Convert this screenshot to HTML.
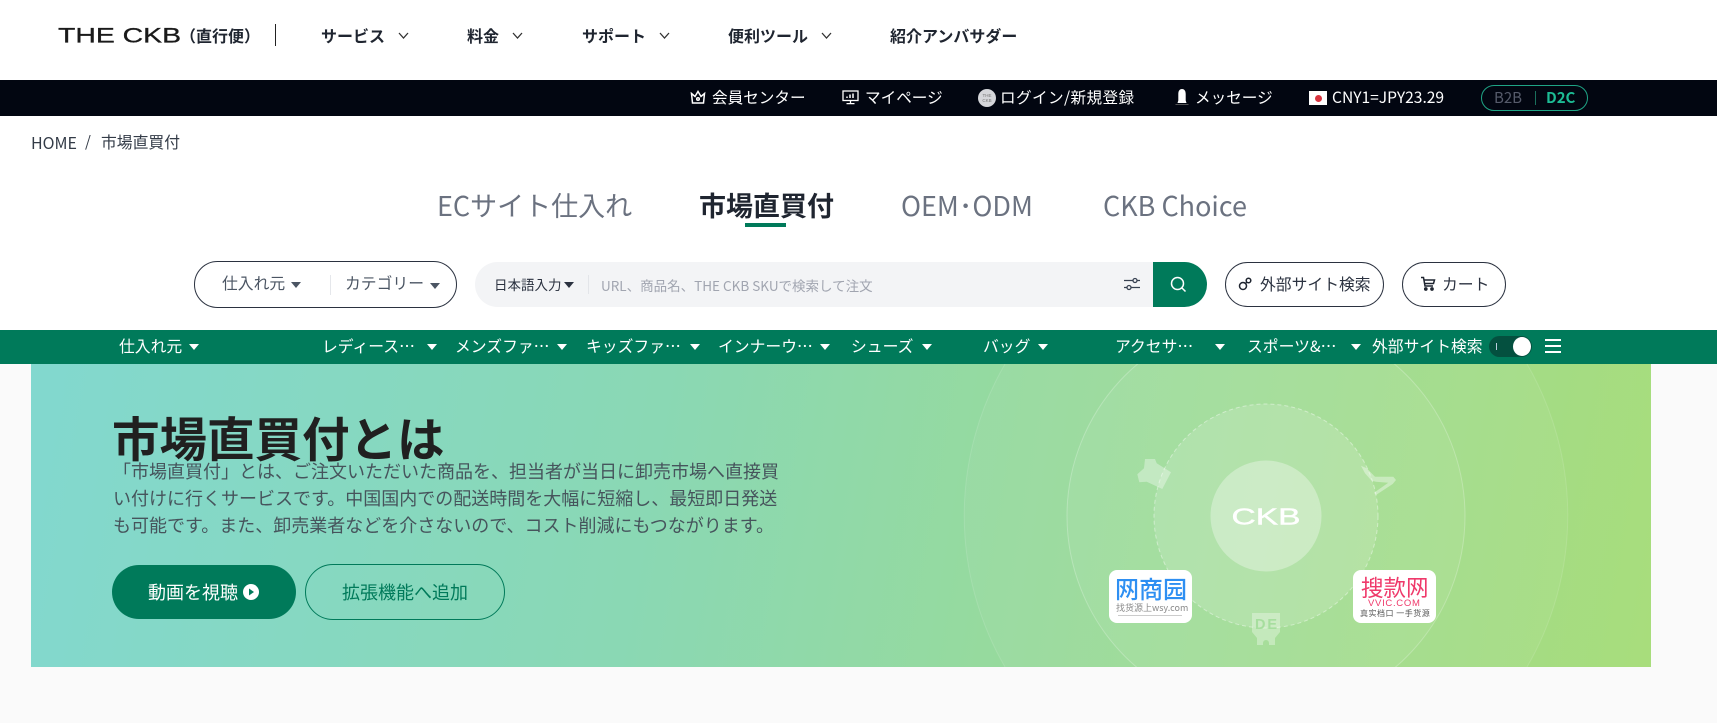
<!DOCTYPE html>
<html lang="ja"><head><meta charset="utf-8"><title>THE CKB</title>
<style>
*{box-sizing:border-box}
html,body{margin:0;padding:0;width:1717px;height:723px;overflow:hidden}
body{position:relative;background:#fff;font-family:"Liberation Sans","Noto Sans CJK JP",sans-serif}
.n,.n *{font-family:"Noto Sans CJK JP",sans-serif}
.t{position:absolute;white-space:nowrap;line-height:20px;height:20px;font-family:"Noto Sans CJK JP",sans-serif}
.b{position:absolute}
.nav{font-size:16px;font-weight:700;color:#1f2530;top:25px}
.top{font-size:15.6px;color:#fff;top:87px}
.tab{font-size:27px;color:#6b7280;top:190px;line-height:30px;height:30px}
.gn{font-size:15.8px;color:#fff;top:336px}
.arr{position:absolute;width:0;height:0;border-left:5px solid transparent;border-right:5px solid transparent;border-top:6px solid #fff;top:344px}
.arrd{position:absolute;width:0;height:0;border-left:5px solid transparent;border-right:5px solid transparent;border-top:6px solid #4b5563}
svg{position:absolute;overflow:hidden}
</style></head><body>

<!-- header -->
<svg style="left:0;top:0" width="300" height="80"><text x="58" y="42.5" font-family="Liberation Sans" font-size="21" fill="#1a1a1a" stroke="#1a1a1a" stroke-width=".3" textLength="123" lengthAdjust="spacingAndGlyphs">THE CKB</text></svg>
<span class="t" style="left:180px;top:25px;font-size:16px;font-weight:700;color:#1f2530">（直行便）</span>
<div class="b" style="left:275px;top:24px;width:1px;height:22px;background:#222"></div>
<span class="t nav" style="left:321px">サービス</span>
<svg style="left:398px;top:32px" width="12" height="8" fill="none" stroke="#333" stroke-width="1.3"><path d="M1 1l4.5 5L10 1"/></svg>
<span class="t nav" style="left:467px">料金</span>
<svg style="left:512px;top:32px" width="12" height="8" fill="none" stroke="#333" stroke-width="1.3"><path d="M1 1l4.5 5L10 1"/></svg>
<span class="t nav" style="left:582px">サポート</span>
<svg style="left:659px;top:32px" width="12" height="8" fill="none" stroke="#333" stroke-width="1.3"><path d="M1 1l4.5 5L10 1"/></svg>
<span class="t nav" style="left:728px">便利ツール</span>
<svg style="left:821px;top:32px" width="12" height="8" fill="none" stroke="#333" stroke-width="1.3"><path d="M1 1l4.5 5L10 1"/></svg>
<span class="t nav" style="left:890px">紹介アンバサダー</span>

<!-- top bar -->
<div class="b" style="left:0;top:80px;width:1717px;height:36px;background:#020611"></div>
<svg style="left:690px;top:90px" width="16" height="15" fill="none" stroke="#fff" stroke-width="1.5"><path d="M1.5 3.5l3.5 3L8 1.5l3 5 3.5-3-1 9.5h-11z"/><circle cx="8" cy="9" r="1.3"/></svg>
<span class="t top" style="left:712px">会員センター</span>
<svg style="left:842px;top:90px" width="17" height="15" fill="none" stroke="#fff" stroke-width="1.3"><rect x="1" y="1" width="15" height="9.5"/><path d="M8.5 10.5v3M4.5 13.6h8"/><path d="M5 8V6.5M8 8V4.500M11 8V3.5" stroke-width="1.5"/></svg>
<span class="t top" style="left:865px">マイページ</span>
<div class="b" style="left:978px;top:89px;width:18px;height:18px;border-radius:50%;background:#d5d6da"></div>
<span class="t" style="left:978px;top:93px;width:18px;height:10px;line-height:5px;font-size:4.5px;color:#777;text-align:center;font-family:'Liberation Sans',sans-serif;white-space:normal">THE CKB</span>
<span class="t top" style="left:1000px;letter-spacing:.4px">ログイン/新規登録</span>
<svg style="left:1175px;top:89px" width="14" height="18" fill="#fff"><path d="M7 0c-2.6 0-3.7 2.2-3.7 5v6.5L2.500 14h9l-.8-2.500V5C10.700 2.200 9.600 0 7 0z"/><path d="M.5 15h13v.8H.5z" fill="#666"/></svg>
<span class="t top" style="left:1195px">メッセージ</span>
<div class="b" style="left:1309px;top:91px;width:18px;height:14px;background:#fff"></div>
<div class="b" style="left:1315px;top:95px;width:7px;height:7px;border-radius:50%;background:#d8343f"></div>
<span class="t top" style="left:1332px">CNY1=JPY23.29</span>
<div class="b" style="left:1481px;top:85px;width:107px;height:26px;border:1px solid #1fa586;border-radius:13px"></div>
<span class="t" style="left:1494px;top:88px;font-size:15px;color:#565b6b">B2B</span>
<div class="b" style="left:1535px;top:91px;width:1px;height:14px;background:#1a6f5c"></div>
<span class="t" style="left:1546px;top:88px;font-size:15px;font-weight:700;color:#1dbb94">D2C</span>

<!-- breadcrumb -->
<span class="t" style="left:31px;top:132px;font-size:16px;color:#333b47">HOME</span>
<span class="t" style="left:85px;top:132px;font-size:15px;color:#333b47">/</span>
<span class="t" style="left:101px;top:132px;font-size:15.8px;color:#333b47">市場直買付</span>

<!-- tabs -->
<span class="t tab" style="left:437px">ECサイト仕入れ</span>
<span class="t tab" style="left:699px;font-weight:700;color:#1f2530">市場直買付</span>
<span class="t tab" style="left:901px">OEM･ODM</span>
<span class="t tab" style="left:1103px">CKB Choice</span>
<div class="b" style="left:745px;top:223px;width:41px;height:4px;background:#007a5a"></div>

<!-- selects -->
<div class="b" style="left:194px;top:261px;width:263px;height:47px;border:1px solid #2b3240;border-radius:24px"></div>
<span class="t" style="left:222px;top:273px;font-size:15.8px;color:#4b5563">仕入れ元</span>
<div class="arrd" style="left:291px;top:282px"></div>
<div class="b" style="left:330px;top:275px;width:1px;height:20px;background:#e5e7eb"></div>
<span class="t" style="left:345px;top:273px;font-size:15.8px;color:#4b5563">カテゴリー</span>
<div class="arrd" style="left:430px;top:283px"></div>

<!-- search -->
<div class="b" style="left:475px;top:262px;width:680px;height:45px;background:#f3f4f6;border-radius:23px 0 0 23px"></div>
<div class="b" style="left:1153px;top:262px;width:54px;height:45px;background:#007a5a;border-radius:0 23px 23px 0"></div>
<span class="t" style="left:494px;top:274px;font-size:13.5px;color:#2b3240">日本語入力</span>
<div class="arrd" style="left:564px;top:282px;border-top-color:#2b3240"></div>
<div class="b" style="left:588px;top:275px;width:1px;height:19px;background:#e3e5e9"></div>
<span class="t" style="left:601px;top:275px;font-size:13.5px;color:#a1a5b0">URL、商品名、THE CKB SKUで検索して注文</span>
<svg style="left:1123px;top:276px" width="18" height="16" fill="none" stroke="#374151" stroke-width="1.3"><path d="M1 4.500h9M14 4.500h3M1 11.500h3M8 11.500h9"/><circle cx="12" cy="4.500" r="2"/><circle cx="6" cy="11.500" r="2"/></svg>
<svg style="left:1170px;top:276px" width="17" height="17" fill="none" stroke="#fff" stroke-width="1.5"><circle cx="7.500" cy="7.500" r="6"/><path d="M12 12l3.500 3.500"/></svg>

<div class="b" style="left:1225px;top:262px;width:159px;height:45px;border:1px solid #2b3240;border-radius:23px"></div>
<svg style="left:1238px;top:277px" width="14" height="14" fill="none" stroke="#1f2530" stroke-width="1.5"><circle cx="5" cy="9" r="3.500"/><circle cx="10.500" cy="3.500" r="2.300"/><path d="M7.500 6.500l1.500-1.500"/></svg>
<span class="t" style="left:1260px;top:274px;font-size:15.8px;color:#2b3240">外部サイト検索</span>
<div class="b" style="left:1402px;top:262px;width:104px;height:45px;border:1px solid #2b3240;border-radius:23px"></div>
<svg style="left:1420px;top:276px" width="16" height="16" fill="none" stroke="#1f2530" stroke-width="1.5"><path d="M1 1.500h2.500l1.500 8.500h8M4 4h10.500l-1 3.500H4.800"/><circle cx="5.800" cy="13" r="1.100" fill="#1f2530"/><circle cx="12" cy="13" r="1.100" fill="#1f2530"/></svg>
<span class="t" style="left:1442px;top:274px;font-size:15.8px;color:#2b3240">カート</span>

<!-- green nav -->
<div class="b" style="left:0;top:330px;width:1717px;height:34px;background:#007a5a"></div>
<span class="t gn" style="left:119px">仕入れ元</span><div class="arr" style="left:189px"></div>
<span class="t gn" style="left:322px">レディース…</span><div class="arr" style="left:427px"></div>
<span class="t gn" style="left:455px">メンズファ…</span><div class="arr" style="left:557px"></div>
<span class="t gn" style="left:586px">キッズファ…</span><div class="arr" style="left:690px"></div>
<span class="t gn" style="left:718px">インナーウ…</span><div class="arr" style="left:820px"></div>
<span class="t gn" style="left:851px">シューズ</span><div class="arr" style="left:922px"></div>
<span class="t gn" style="left:983px">バッグ</span><div class="arr" style="left:1038px"></div>
<span class="t gn" style="left:1115px">アクセサ…</span><div class="arr" style="left:1215px"></div>
<span class="t gn" style="left:1247px">スポーツ&amp;…</span><div class="arr" style="left:1351px"></div>
<span class="t gn" style="left:1372px">外部サイト検索</span>
<div class="b" style="left:1489px;top:336px;width:43px;height:21px;background:#04503f;border-radius:11px"></div>
<div class="b" style="left:1496px;top:343px;width:1px;height:7px;background:#bcd"></div>
<div class="b" style="left:1513px;top:337px;width:18px;height:19px;background:#fff;border-radius:50%"></div>
<div class="b" style="left:1545px;top:339px;width:16px;height:2px;background:#fff"></div>
<div class="b" style="left:1545px;top:345px;width:16px;height:2px;background:#fff"></div>
<div class="b" style="left:1545px;top:351px;width:16px;height:2px;background:#fff"></div>

<!-- page bg + banner -->
<div class="b" style="left:0;top:364px;width:1717px;height:359px;background:#fafafa"></div>
<div class="b" style="left:31px;top:364px;width:1620px;height:303px;overflow:hidden;background:linear-gradient(100deg,#82d8cf 0%,#8ad8b4 38%,#97da9c 62%,#a8dd7c 100%)">
<svg style="left:0;top:0" width="1620" height="303">
<g transform="translate(1235,152)">
<path d="M-261-152A302 302 0 0 0-261 151L261 151A302 302 0 0 0 261-152z" fill="#fff" fill-opacity=".05"/>
<path d="M-261-152A302 302 0 0 0-261 151M261 151A302 302 0 0 0 261-152" fill="none" stroke="#fff" stroke-opacity=".13"/>
<circle r="199" fill="#fff" fill-opacity=".06" stroke="#fff" stroke-opacity=".25"/>
<circle r="112" fill="#fff" fill-opacity=".14" stroke="#fff" stroke-opacity=".42" stroke-dasharray="4 3"/>
<circle r="55.5" fill="#fff" fill-opacity=".33"/>
<text x="-34.500" y="8.500" font-family="Liberation Sans" font-size="23" fill="#fff" stroke="#fff" stroke-width=".4" textLength="69" lengthAdjust="spacingAndGlyphs">CKB</text>
<!-- shirt -->
<path d="M-121-57h10l1.700 4.300L-95-43.700-103.700-27-119.300-34.300l-7.400.6-2-8 6.700-6z" fill="#fff" fill-opacity=".35"/>
<!-- heel -->
<path d="M95-50.300l5.700 2.600 8.300 8.400h18.300l2.700 3.300-3.300 4-16.700 11-2-2.300 14.300-10-12.300-1-4.300-1-6.700-7.400z" fill="#fff" fill-opacity=".38"/>
<!-- tag -->
<path d="M-14 97h28v19l-5 6v7h-6v-2a3 3 0 0 0-6 0v2h-6v-7l-5-6z" fill="#fff" fill-opacity=".33"/>
<text x="-11" y="113" font-family="Liberation Sans" font-size="14.5" font-weight="700" fill="#a6de9e" textLength="22">DE</text>
</g>
</svg>
</div>

<!-- banner text -->
<span class="t" style="left:112px;top:405px;height:64px;line-height:64px;font-size:47.5px;font-weight:700;color:#202020">市場直買付とは</span>
<div class="b n" style="left:113px;top:458px;font-size:18px;line-height:27px;color:#46545c;white-space:nowrap">「市場直買付」とは、ご注文いただいた商品を、担当者が当日に卸売市場へ直接買<br>い付けに行くサービスです。中国国内での配送時間を大幅に短縮し、最短即日発送<br>も可能です。また、卸売業者などを介さないので、コスト削減にもつながります。</div>
<div class="b" style="left:112px;top:565px;width:184px;height:54px;background:#007a5a;border-radius:27px"></div>
<span class="t" style="left:148px;top:582px;font-size:18px;color:#fff">動画を視聴</span>
<svg style="left:243px;top:584px" width="16" height="16"><circle cx="8" cy="8" r="8" fill="#fff"/><path d="M6 4.500l5 3.500-5 3.500z" fill="#007a5a"/></svg>
<div class="b" style="left:305px;top:564px;width:200px;height:56px;border:1px solid #007a5a;border-radius:28px"></div>
<span class="t" style="left:342px;top:582px;font-size:18px;color:#007a5a">拡張機能へ追加</span>

<!-- wsy card -->
<div class="b" style="left:1109px;top:570px;width:83px;height:53px;background:#fff;border-radius:8px"></div>
<span class="t" style="left:1115px;top:575px;height:26px;line-height:26px;font-size:24px;font-weight:500;color:#2e8ff2;font-family:'Noto Sans CJK SC',sans-serif">网商园</span>
<span class="t" style="left:1116px;top:602px;height:12px;line-height:12px;font-size:9px;color:#8a8a8a;font-family:'Noto Sans CJK SC',sans-serif">找货源上wsy.com</span>
<div class="b" style="left:1118px;top:615px;width:64px;height:1px;background:#ccc"></div>
<!-- vvic card -->
<div class="b" style="left:1353px;top:570px;width:83px;height:53px;background:#fff;border-radius:8px"></div>
<span class="t" style="left:1361px;top:574px;height:26px;line-height:26px;font-size:22.5px;color:#ef3a6b;font-weight:400;font-family:'Noto Sans CJK SC',sans-serif">搜款网</span>
<span class="t" style="left:1368px;top:598px;height:12px;line-height:12px;font-size:9.5px;color:#ef3a6b;letter-spacing:.7px;font-family:'Liberation Sans',sans-serif">VVIC.COM</span>
<span class="t" style="left:1360px;top:608px;height:11px;line-height:11px;font-size:8px;color:#555;letter-spacing:.5px;font-family:'Noto Sans CJK SC',sans-serif">真实档口 一手货源</span>
</body></html>
